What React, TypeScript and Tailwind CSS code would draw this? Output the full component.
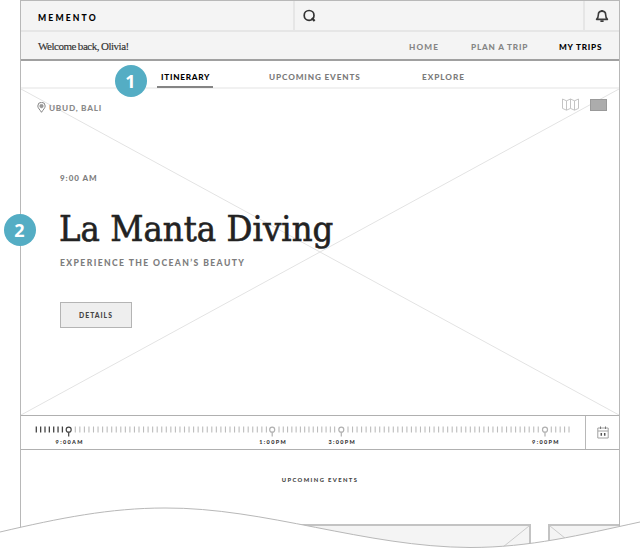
import type { ReactNode } from 'react';

const range = (start: number, step: number, count: number) =>
  Array.from({ length: count }, (_, i) => start + step * i);

const pastTicks = range(36.3, 4.35, 7);
const futureTicks = [
  ...range(75.3, 4.55, 43),
  ...range(279, 4.28, 14),
  ...range(348, 4.53, 43),
  ...range(551.3, 4.43, 5),
];

const stops = [
  { x: 68.7, label: '9:00AM', active: true },
  { x: 272.2, label: '1:00PM', active: false },
  { x: 341.3, label: '3:00PM', active: false },
  { x: 545, label: '9:00PM', active: false },
];

function Badge({ children, className }: { children: ReactNode; className: string }) {
  return (
    <div
      className={`absolute z-20 flex h-8 w-8 items-center justify-center rounded-full bg-[#54adc4] pb-px pr-px font-['Open_Sans',sans-serif] text-[18px] font-bold leading-none text-white ${className}`}
    >
      {children}
    </div>
  );
}

function Header() {
  return (
    <header className="border-b-2 border-[#a0a0a0] bg-[#f4f4f4]">
      <div className="flex h-[31px] border-b-2 border-[#e6e6e6]">
        <div className="w-[274px] border-r-2 border-[#e6e6e6] pl-[17px] pt-[12px] text-[8.6px] font-black leading-[11px] tracking-[2.15px] text-black">
          MEMENTO
        </div>
        <div className="grow pl-[8px] pt-[8px]">
          <svg width="13" height="13" viewBox="0 0 13 13" fill="none" stroke="#333" strokeWidth="1.7">
            <circle cx="6.1" cy="6.4" r="4.9" />
            <path d="M8.8 9 L11.6 12" strokeWidth="2.2" />
          </svg>
        </div>
        <div className="w-[36px] border-l-2 border-[#e6e6e6] pl-[10px] pt-[8px]">
          <svg width="14" height="14" viewBox="0 0 14 14" fill="none" stroke="#3c3c3c" strokeWidth="1.6">
            <path d="M1.6 10.4 C3.3 8.6 3.3 7.5 3.3 5.9 C3.3 3.5 4.6 2.1 7 2.1 C9.4 2.1 10.7 3.5 10.7 5.9 C10.7 7.5 10.7 8.6 12.4 10.4 Z" strokeLinejoin="round" />
            <path d="M5.4 12.1 H8.6 M7 2 V1" strokeWidth="1.8" />
          </svg>
        </div>
      </div>
      <div className="flex h-[27px] items-start pl-[17px] pr-[17px] text-[8.2px] font-black leading-[11px] tracking-[1.2px] text-[#858585]">
        <span className="grow whitespace-nowrap pt-[7px] font-['Liberation_Serif',serif] text-[11px] font-normal leading-[14px] tracking-[-0.48px] [word-spacing:-0.3px] text-[#333] [-webkit-text-stroke:0.15px_#333]">
          Welcome back, Olivia!
        </span>
        <nav className="flex pt-[10px]">
          <span className="w-[62px]">HOME</span>
          <span className="w-[88px] tracking-[0.82px]">PLAN A TRIP</span>
          <span className="w-[43px] whitespace-nowrap tracking-[0.8px] text-black">MY TRIPS</span>
        </nav>
      </div>
    </header>
  );
}

function Tabs() {
  return (
    <nav className="flex h-[28px] border-b-2 border-[#f1f1f1] pl-[136px] text-[8.2px] font-black leading-[11px] tracking-[0.95px] text-[#7b7b7b]">
      <div className="h-[27px] w-[56px] border-b-2 border-[#858585] pl-[4px] pt-[11px] tracking-[0.75px] text-black">
        ITINERARY
      </div>
      <div className="w-[154px] whitespace-nowrap pl-[56px] pt-[11px] tracking-[0.88px]">UPCOMING EVENTS</div>
      <div className="pl-[55px] pt-[11px]">EXPLORE</div>
    </nav>
  );
}

function Hero() {
  return (
    <section className="relative h-[326px]">
      <svg className="absolute inset-0" width="598" height="326" viewBox="0 0 598 326" stroke="#e3e3e3" fill="none">
        <path d="M0 0 L598 326 M598 0 L0 326" />
      </svg>
      <div className="relative flex h-[27px] items-start justify-between pl-[16px] pr-[12px]">
        <div className="flex pt-[13px]">
          <svg width="9" height="11" viewBox="0 0 9 11" fill="none" stroke="#777">
            <path d="M4.5 10.3 C3 7.8 0.8 6 0.8 4 A3.7 3.7 0 0 1 8.2 4 C8.2 6 6 7.8 4.5 10.3 Z" strokeWidth="0.9" />
            <circle cx="4.5" cy="4.1" r="1.8" fill="#999" stroke="#888" strokeWidth="0.5" />
          </svg>
          <span className="pl-[3px] text-[8.2px] font-black leading-[12px] tracking-[0.75px] text-[#8a8a8a]">UBUD, BALI</span>
        </div>
        <div className="flex gap-[11px] pt-[9px]">
          <svg width="17" height="13" viewBox="0 0 17 13" fill="none" stroke="#bdbdbd" strokeWidth="0.9">
            <path d="M0.5 1 L4.5 2.8 L8.5 1 L12.5 2.8 L16.5 1 V10.4 L12.5 12.2 L8.5 10.4 L4.5 12.2 L0.5 10.4 Z M4.5 2.8 V12 M8.5 1 V10.4 M12.5 2.8 V12" />
          </svg>
          <div className="mt-px h-[12px] w-[17px] border border-[#999] bg-[#acacac]" />
        </div>
      </div>
      <div className="relative pl-[39px] pt-[57px]">
        <p className="text-[8px] font-black leading-[11px] tracking-[0.95px] text-[#7d7d7d]">9:00 AM</p>
        <h1 className="-ml-px mt-[24px] whitespace-nowrap font-['DejaVu_Serif_Condensed','DejaVu_Serif',serif] text-[36px] font-normal leading-[42px] tracking-[0.05px] text-[#222] [font-stretch:condensed] [-webkit-text-stroke:0.6px_#222]">
          La Manta Diving
        </h1>
        <p className="mt-[8px] text-[8.6px] font-black leading-[11px] tracking-[1.4px] text-[#7d7d7d]">EXPERIENCE THE OCEAN’S BEAUTY</p>
        <button className="mt-[33px] flex h-[26px] w-[72px] items-center justify-center border border-[#b4b4b4] bg-[#eee] pt-px text-[6.8px] font-black leading-none tracking-[1px] text-[#444]">
          DETAILS
        </button>
      </div>
    </section>
  );
}

function Timeline() {
  return (
    <section className="flex h-[35px] border-y border-[#b0b0b0]">
      <svg className="h-[33px] w-[564px] shrink-0" viewBox="21 416 564 33" fill="none">
        {pastTicks.map((x) => (
          <path key={x} d={`M${x} 426.5 V432.5`} stroke="#444" strokeWidth="1.3" />
        ))}
        {futureTicks.map((x) => (
          <path key={x} d={`M${x} 426.5 V432.5`} stroke="#bcbcbc" strokeWidth="1.1" />
        ))}
        {stops.map(({ x, label, active }) => (
          <g key={label}>
            <circle cx={x} cy="429.7" r="2.5" fill="#fff" stroke={active ? '#444' : '#b0b0b0'} strokeWidth="1.2" />
            <path d={`M${x} 432.2 V436.5`} stroke={active ? '#444' : '#b0b0b0'} strokeWidth="1.2" />
            <text x={x + 1} y="444" textAnchor="middle" fill="#333" className="text-[5.5px] font-black tracking-[1.35px]">
              {label}
            </text>
          </g>
        ))}
      </svg>
      <div className="grow border-l border-[#b8b8b8] pl-[11px] pt-[10px]">
        <svg width="12" height="13" viewBox="0 0 12 13" fill="none" stroke="#a0a0a0">
          <path d="M0.8 2 H11.2 V12 H0.8 Z M1 5 H11" />
          <path d="M3.5 0.5 V3 M8.5 0.5 V3" stroke="#777" />
          <path d="M4.3 7 V9.8 M7.7 7 V9.8" stroke="#555" strokeWidth="1.5" />
        </svg>
      </div>
    </section>
  );
}

function Upcoming() {
  return (
    <section className="pt-[25px]">
      <h2 className="text-center text-[5.8px] font-black leading-[9px] tracking-[1.4px] text-[#444]">UPCOMING EVENTS</h2>
      <div className="mt-[40px] flex gap-[17px] pl-[200px]">
        <div className="h-[25px] w-[310px] border-2 border-b-0 border-[#c3c3c3] bg-[#f4f4f4]">
          <svg className="ml-auto" width="26" height="23" stroke="#ccc"><path d="M26 0 L0 21" /></svg>
        </div>
        <div className="h-[25px] grow border-2 border-b-0 border-r-0 border-[#c3c3c3] bg-[#f4f4f4]">
          <svg width="26" height="23" stroke="#ccc"><path d="M0 0 L26 21" /></svg>
        </div>
      </div>
    </section>
  );
}

export default function App() {
  return (
    <div className="relative h-[548px] w-[640px] overflow-hidden bg-white font-[Lato,sans-serif]">
      <main className="mx-[20px] h-[548px] border border-b-0 border-[#b8b8b8]">
        <Header />
        <Tabs />
        <Hero />
        <Timeline />
        <Upcoming />
      </main>
      <svg className="absolute bottom-0 left-0 z-10" width="640" height="48" viewBox="0 500 640 48" fill="none">
        <path d="M0 532 C60 518 110 508 165 508 C265 507.5 365 547 470 547.5 C530 547.5 580 535 640 522 V560 H0 Z" fill="#fff" />
        <path d="M0 532 C60 518 110 508 165 508 C265 507.5 365 547 470 547.5 C530 547.5 580 535 640 522" stroke="#b8b8b8" />
      </svg>
      <Badge className="left-[115px] top-[65px]">1</Badge>
      <Badge className="left-[4px] top-[214px]">2</Badge>
    </div>
  );
}
